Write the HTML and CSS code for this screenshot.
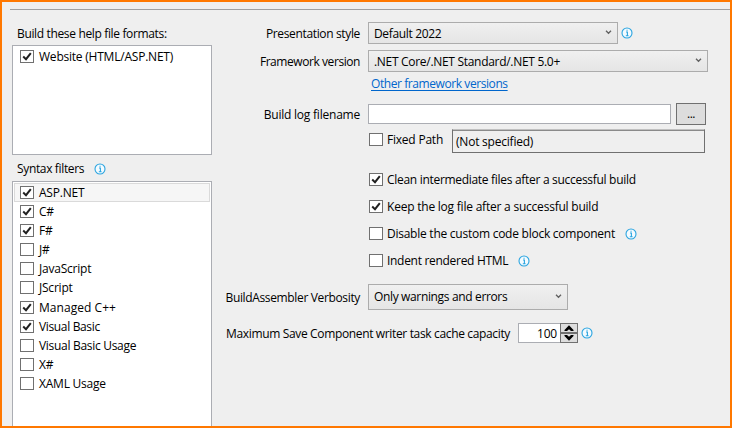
FILE: index.html
```
<!DOCTYPE html>
<html lang="en">
<head>
<meta charset="utf-8">
<title>Build options</title>
<link rel="stylesheet" href="styles.css">
</head>
<body>
<svg width="0" height="0" class="defs">
  <symbol id="info" viewBox="0 0 12 12"><circle cx="6" cy="6" r="5" fill="#f4fbff" stroke="#2ba5e0" stroke-width="1.1"/><path d="M5 5h1.4v3.6M4.8 8.7h2.8M5.5 3.2h1.1" fill="none" stroke="#2ba5e0" stroke-width="1.1"/></symbol>
  <symbol id="tick" viewBox="0 0 14 13"><path d="M3.2 6.6L6 9.2L10.8 3.2" fill="none" stroke="#212121" stroke-width="2"/></symbol>
  <symbol id="chev" viewBox="0 0 7 5"><path d="M1 .8L3.5 3.3L6 .8" fill="none" stroke="#606060" stroke-width="1.3"/></symbol>
</svg>
<main class="page">
  <hr class="rule">
  <div class="columns">
    <section class="side">
      <div class="caption first"><span class="tight">Build these help file formats:</span></div>
      <div class="list formats">
        <label class="item"><i class="box"><svg><use href="#tick"/></svg></i><span>Website (HTML/ASP.NET)</span></label>
      </div>
      <div class="caption second"><span class="tight">Syntax filters</span><svg class="info"><use href="#info"/></svg></div>
      <div class="list filters">
        <label class="item current"><i class="box"><svg><use href="#tick"/></svg></i><span>ASP.NET</span></label>
        <label class="item"><i class="box"><svg><use href="#tick"/></svg></i><span>C#</span></label>
        <label class="item"><i class="box"><svg><use href="#tick"/></svg></i><span>F#</span></label>
        <label class="item"><i class="box"></i><span>J#</span></label>
        <label class="item"><i class="box"></i><span>JavaScript</span></label>
        <label class="item tall"><i class="box"></i><span>JScript</span></label>
        <label class="item"><i class="box"><svg><use href="#tick"/></svg></i><span class="loose">Managed C++</span></label>
        <label class="item"><i class="box"><svg><use href="#tick"/></svg></i><span class="tight">Visual Basic</span></label>
        <label class="item"><i class="box"></i><span class="snug">Visual Basic Usage</span></label>
        <label class="item"><i class="box"></i><span>X#</span></label>
        <label class="item"><i class="box"></i><span>XAML Usage</span></label>
      </div>
    </section>
    <section class="form">
      <div class="row style"><span class="label tight">Presentation style</span><div class="combo w250"><span class="tight">Default 2022</span><svg class="chev"><use href="#chev"/></svg></div><svg class="info"><use href="#info"/></svg></div>
      <div class="row framework"><span class="label tighter">Framework version</span><div class="combo w340"><span class="snug">.NET Core/.NET Standard/.NET 5.0+</span><svg class="chev"><use href="#chev"/></svg></div></div>
      <div class="row other"><a class="link">Other framework versions</a></div>
      <div class="row log"><span class="label low">Build log filename</span><div class="input"></div><div class="browse">...</div></div>
      <div class="row path"><i class="box"></i><span class="check-text">Fixed Path</span><div class="readonly"><span>(Not specified)</span></div></div>
      <div class="row check"><i class="box"><svg><use href="#tick"/></svg></i><span class="check-text snug">Clean intermediate files after a successful build</span></div>
      <div class="row check"><i class="box"><svg><use href="#tick"/></svg></i><span class="check-text">Keep the log file after a successful build</span></div>
      <div class="row check"><i class="box"></i><span class="check-text slight">Disable the custom code block component</span><svg class="info"><use href="#info"/></svg></div>
      <div class="row check"><i class="box"></i><span class="check-text snug">Indent rendered HTML</span><svg class="info"><use href="#info"/></svg></div>
      <div class="row verbosity"><span class="label low tight">BuildAssembler Verbosity</span><div class="combo w200"><span class="tight">Only warnings and errors</span><svg class="chev"><use href="#chev"/></svg></div></div>
      <div class="row capacity"><span class="label low wide tight">Maximum Save Component writer task cache capacity</span><div class="spinner"><span>100</span><div class="steps"><i><svg viewBox="0 0 16 8"><path d="M3.5 6L8 1.2L12.5 6V7H10L8 5.2L6 7H3.5z"/></svg></i><i><svg viewBox="0 0 16 8"><path d="M3.5 2L8 6.8L12.5 2V1H10L8 2.8L6 1H3.5z"/></svg></i></div></div><svg class="info"><use href="#info"/></svg></div>
    </section>
  </div>
</main>
</body>
</html>
```
FILE: styles.css
```
* { box-sizing: border-box; }
body { margin: 0; font: 12px/16px "Open Sans", "Noto Sans", sans-serif; letter-spacing: -0.22px; color: #000; }
.defs { position: absolute; }
svg { display: block; }
span, a { white-space: nowrap; }
.slight { letter-spacing: -0.25px; }
.snug { letter-spacing: -0.3px; }
.tight { letter-spacing: -0.35px; }
.tighter { letter-spacing: -0.43px; }
.loose { letter-spacing: 0.05px; }
.page { width: 732px; height: 428px; border: 2px solid #ff7800; background: #efefef; overflow: hidden; }
.rule { height: 1px; margin: 7px 0 0 8px; border: 0; background: #a0a0a0; }
.columns { display: flex; height: 416px; }
.side { display: flex; flex-direction: column; width: 200px; margin-left: 10px; }
.caption { display: flex; align-items: center; padding-left: 5px; gap: 10px; }
.first { height: 35px; padding-top: 12px; }
.second { height: 26px; padding-top: 1px; }
.list { border: 1px solid #abadb3; background: #fff; padding: 1px; }
.formats { height: 110px; }
.filters { flex: 1; border-bottom: 0; }
.item { display: flex; align-items: center; gap: 5px; height: 19px; padding-left: 6px; }
.tall { height: 20px; padding-bottom: 1px; }
.current { background: #f6f6f6; box-shadow: inset 0 0 0 1px #dadada; }
.box { flex: none; width: 14px; height: 13px; border: 1px solid #707070; background: #fff; }
.box svg { width: 14px; height: 13px; margin: -1px; }
.info { flex: none; width: 12px; height: 12px; }
.form { flex: 1; padding: 12px 0 0 14px; }
.row { display: flex; align-items: center; }
.label { display: flex; justify-content: flex-end; width: 134px; margin-right: 8px; padding-top: 1px; }
.low { padding-top: 2px; }
.combo { display: flex; align-items: center; justify-content: space-between; height: 22px; padding: 1px 3px 0 5px; border: 1px solid #acacac; background: linear-gradient(#f0f0f0, #e5e5e5); }
.w250 { width: 250px; margin-right: 3px; }
.w340 { width: 340px; }
.w200 { width: 200px; }
.chev { width: 7px; height: 5px; margin: -2px 2px 0 0; }
.style { height: 22px; }
.framework { height: 22px; margin-top: 6px; }
.other { height: 18px; padding: 6px 0 0 145px; }
.link { color: #0066cc; letter-spacing: -0.42px; text-decoration: underline; text-underline-offset: 2px; }
.log { height: 22px; margin-top: 13px; }
.input { width: 303px; height: 20px; margin-right: 5px; border: 1px solid #abadb3; background: #fff; }
.browse { width: 30px; height: 22px; border: 1px solid #707070; background: #ddd; text-align: center; letter-spacing: -0.5px; line-height: 20px; }
.path { height: 24px; margin: 4px 0 13px; padding-left: 143px; align-items: flex-start; }
.path .box { margin-top: 4px; }
.path .check-text { margin-top: 3px; width: 65px; }
.readonly { width: 253px; height: 24px; border: 1px solid #707070; border-top: 1px solid #c0c0c0; box-shadow: inset 0 1px #8a8a8a; padding: 4px 3px; }
.check { height: 27px; padding-left: 143px; }
.check-text { margin-left: 4px; }
.check .info { margin-left: 10px; }
.verbosity { height: 26px; margin-top: 10px; }
.verbosity .combo { height: 26px; padding-bottom: 2px; }
.verbosity .chev { margin-top: 0; }
.capacity { height: 20px; margin-top: 13px; }
.wide { width: 284px; }
.spinner { display: flex; width: 60px; height: 20px; margin-right: 3px; border: 1px solid #abadb3; background: #fff; }
.spinner > span { width: 41px; padding-right: 3px; line-height: 19px; text-align: right; }
.steps { width: 18px; height: 20px; margin: -1px -1px -1px 0; padding: 1px; background: #707070; }
.steps i { display: block; height: 8px; background: #ddd; }
.steps i + i { margin-top: 2px; }
.steps svg { width: 16px; height: 8px; }
```
